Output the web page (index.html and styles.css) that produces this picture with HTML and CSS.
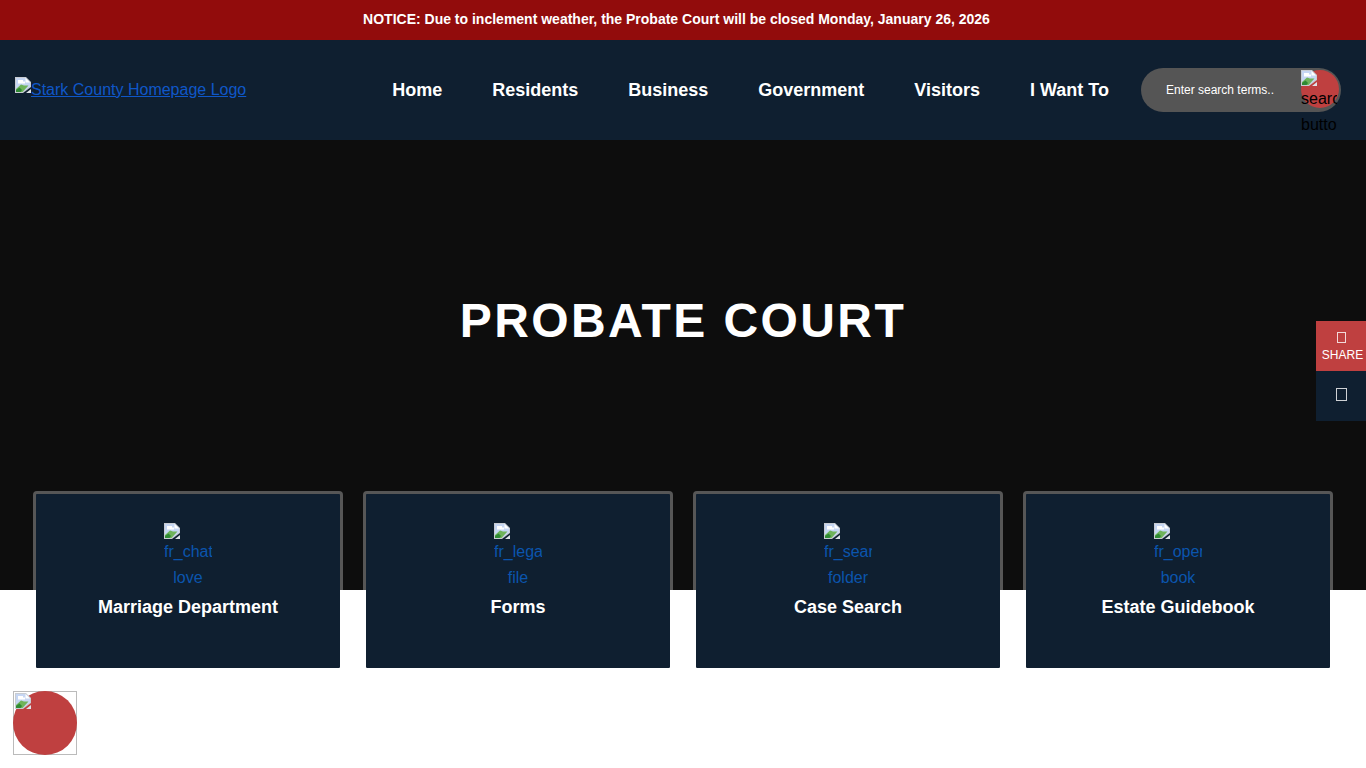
FILE: index.html
```html
<!DOCTYPE html>
<html lang="en">
<head>
<meta charset="utf-8">
<title>Probate Court | Stark County</title>
<link rel="stylesheet" href="styles.css">
</head>
<body>
<svg class="sprite" width="0" height="0" aria-hidden="true">
  <symbol id="broken" viewBox="0 0 16 16">
    <path d="M0 0H11L16 5V10L8 16H0Z" fill="#c8ccd2"/>
    <path d="M1 1H10.5L15 5.5V9.5L7.5 15H1Z" fill="#c6d6f3"/>
    <path d="M3 3H8V4.5H10V6.5H3Z" fill="#fff"/>
    <path d="M10.5 1V5.5H15Z" fill="#fff"/>
    <path d="M1 15V12L6 7.5L9 8.5L13.5 8.5L7.5 15Z" fill="#6fb35a"/>
    <path d="M1 15V13L4.5 10.5L7 13L5.5 15Z" fill="#2f8a34"/>
    <path d="M16 12V16H11Z" fill="#dfe3e8"/>
  </symbol>
</svg>

<div class="notice">NOTICE: Due to inclement weather, the Probate Court will be closed Monday, January 26, 2026</div>

<header class="header">
  <a class="logo" href="#"><svg class="broken"><use href="#broken"/></svg>Stark County Homepage Logo</a>
  <nav class="nav">
    <a href="#">Home</a>
    <a href="#">Residents</a>
    <a href="#">Business</a>
    <a href="#">Government</a>
    <a href="#">Visitors</a>
    <a href="#">I Want To</a>
  </nav>
  <form class="search">
    <span class="search-text">Enter search terms..</span>
    <span class="search-btn">
      <svg class="broken"><use href="#broken"/></svg>
      <span class="search-alt">search<br>button</span>
    </span>
  </form>
</header>

<section class="hero">
  <h1>PROBATE COURT</h1>
</section>

<section class="cards">
  <a class="card" href="#">
    <span class="card-img"><svg class="broken"><use href="#broken"/></svg><span class="alt">fr_chat</span><span class="alt">love</span></span>
    <strong>Marriage Department</strong>
  </a>
  <a class="card" href="#">
    <span class="card-img"><svg class="broken"><use href="#broken"/></svg><span class="alt">fr_legal</span><span class="alt">file</span></span>
    <strong>Forms</strong>
  </a>
  <a class="card" href="#">
    <span class="card-img"><svg class="broken"><use href="#broken"/></svg><span class="alt">fr_search</span><span class="alt">folder</span></span>
    <strong>Case Search</strong>
  </a>
  <a class="card" href="#">
    <span class="card-img"><svg class="broken"><use href="#broken"/></svg><span class="alt">fr_open</span><span class="alt">book</span></span>
    <strong>Estate Guidebook</strong>
  </a>
</section>

<aside class="side">
  <a class="side-share" href="#"><span class="tofu"></span><span class="share-label">SHARE</span></a>
  <a class="side-alt" href="#"><span class="tofu tofu-lg"></span></a>
</aside>

<div class="chat"><svg class="broken"><use href="#broken"/></svg></div>
</body>
</html>
```
FILE: styles.css
```css
* { box-sizing: border-box; }
html, body { margin: 0; height: 768px; overflow: hidden; background: #fff; }
body { font-family: "Liberation Sans", Arial, sans-serif; font-size: 16px; position: relative; }
.sprite { position: absolute; }
.broken { width: 16px; height: 16px; display: block; flex: none; }

.notice {
  height: 40px; background: #920c0c; color: #fff;
  font-size: 14px; font-weight: 700;
  display: flex; align-items: center; justify-content: center;
  padding: 0 13px 2px 0;
}

.header {
  height: 100px; background: #0f1f30;
  display: flex; align-items: center;
  padding: 0 25px 0 15px;
}
.logo { color: #0f57c8; display: flex; align-items: flex-start; line-height: 24px; text-decoration: underline; }
.logo .broken { margin-top: -1px; }
.nav { margin-left: auto; margin-right: 32px; display: flex; gap: 50px; }
.nav a { color: #fff; font-size: 18px; font-weight: 700; text-decoration: none; }

.search {
  width: 200px; height: 44px; border-radius: 22px; background: #555;
  display: flex; align-items: center; justify-content: space-between;
  padding-left: 25px; padding-right: 2px;
}
.search-text { color: #fff; font-size: 12px; }
.search-btn {
  width: 38px; height: 38px; border-radius: 19px; background: #bf4040;
  align-self: flex-start; margin-top: 2px; position: relative;
}
.search-alt {
  position: absolute; left: 0; top: 16px; width: 36px; overflow: hidden;
  color: #000; font-size: 16px; line-height: 26px; white-space: nowrap;
}

.hero {
  height: 450px; background: #0d0d0d; color: #fff;
  display: flex; align-items: center; justify-content: center;
  padding-bottom: 88px;
}
.hero h1 { margin: 0; font-size: 48px; font-weight: 700; letter-spacing: 2.4px; line-height: 1.2; }

.cards {
  display: grid; grid-template-columns: repeat(4, 310px); gap: 20px;
  padding: 0 33px; margin-top: -99px;
}
.card {
  height: 180px; background: #0f1f30; background-clip: padding-box;
  border: 3px solid rgba(255,255,255,.3); border-radius: 4px;
  display: flex; flex-direction: column; align-items: center;
  padding-top: 29px; text-decoration: none; color: #0b55ad;
}
.card-img { width: 48px; display: block; line-height: 26px; text-align: center; overflow: hidden; height: 67px; }
.alt { display: block; white-space: nowrap; }
.card strong { color: #fff; font-size: 18px; line-height: 22px; margin-top: 6px; }

.side { position: absolute; right: 0; top: 321px; width: 50px; }
.side a { display: flex; flex-direction: column; align-items: center; height: 50px; color: #fff; text-decoration: none; }
.side-share { background: #bf4040; font-size: 12px; padding-top: 11px; gap: 5px; }
.share-label { padding-left: 3px; }
.side-alt { background: #0f1f30; padding-top: 17px; }
.tofu { display: block; width: 9px; height: 11px; border: 1px solid rgba(255,255,255,.8); }
.tofu-lg { width: 11px; height: 13px; }

.chat {
  position: absolute; left: 13px; top: 691px; width: 64px; height: 64px;
  border: 1px solid #bbb; padding: 1px;
}
.chat::before {
  content: ""; position: absolute; inset: -1px; border-radius: 50%; background: #bf4040;
}
.chat .broken { position: relative; }
```
